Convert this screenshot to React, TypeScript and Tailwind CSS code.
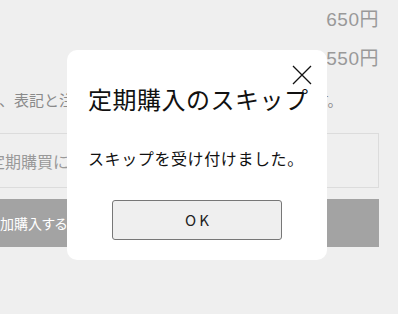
import React from 'react';

const font = { fontFamily: '"Noto Sans CJK JP", "Noto Sans", sans-serif' };

function CloseIcon() {
    return (
        <svg width="20" height="20" viewBox="0 0 20 20" fill="none" stroke="#111" strokeWidth="1.3">
            <path d="M1 1L19 19M19 1L1 19" />
        </svg>
    );
}

export default function App() {
    return (
        <div
            className="relative w-[398px] h-[314px] overflow-hidden bg-[#efefef]"
            style={font}
        >
            {/* page behind the dialog */}
            <div className="ml-[-40px] w-[419px] flex flex-col">
                <div className="h-[40px] flex items-center justify-end text-[19px] text-[#999] tracking-[0.5px] font-['Liberation_Sans','Noto_Sans_CJK_JP',sans-serif]">
                    650円
                </div>
                <div className="h-[38px] flex items-center justify-end text-[19px] text-[#999] tracking-[0.5px] font-['Liberation_Sans','Noto_Sans_CJK_JP',sans-serif]">
                    550円
                </div>
                <div className="h-[44px] flex items-center pl-[24px] text-[15px] text-[#8a8a8a] whitespace-nowrap">
                    は、表記と注文内容が一部異なる場合がございます。
                </div>
                <div className="mt-[11px] h-[55px] border border-[#dcdcdc] flex items-center pl-[28px] text-[16px] text-[#999] whitespace-nowrap">
                    定期購買について
                </div>
                <div className="mt-[11px] h-[48px] bg-[#a3a3a3] flex items-center pl-[26px] text-[14px] text-white whitespace-nowrap [font-feature-settings:'palt']">
                    追加購入する
                </div>
            </div>

            {/* dialog */}
            <div className="absolute left-[67px] top-[50px] w-[260px] h-[210px] bg-white rounded-[10px] flex flex-col px-[21px]">
                <button className="absolute right-[15px] top-[15px] w-[20px] h-[20px]">
                    <CloseIcon />
                </button>
                <h2 className="mt-[34px] h-[30px] flex items-center text-[24px] leading-none tracking-[0.5px] text-[#111] whitespace-nowrap">
                    定期購入のスキップ
                </h2>
                <p className="mt-[34px] h-[20px] flex items-center text-[16px] tracking-[0.6px] text-[#111] whitespace-nowrap">
                    スキップを受け付けました。
                </p>
                <div className="mt-[32px] flex justify-center">
                    <button className="w-[170px] h-[40px] border border-[#777] rounded-[3px] bg-[#efefef] text-[15px] text-[#222] tracking-[3px] pl-[3px]">
                        OK
                    </button>
                </div>
            </div>
        </div>
    );
}
